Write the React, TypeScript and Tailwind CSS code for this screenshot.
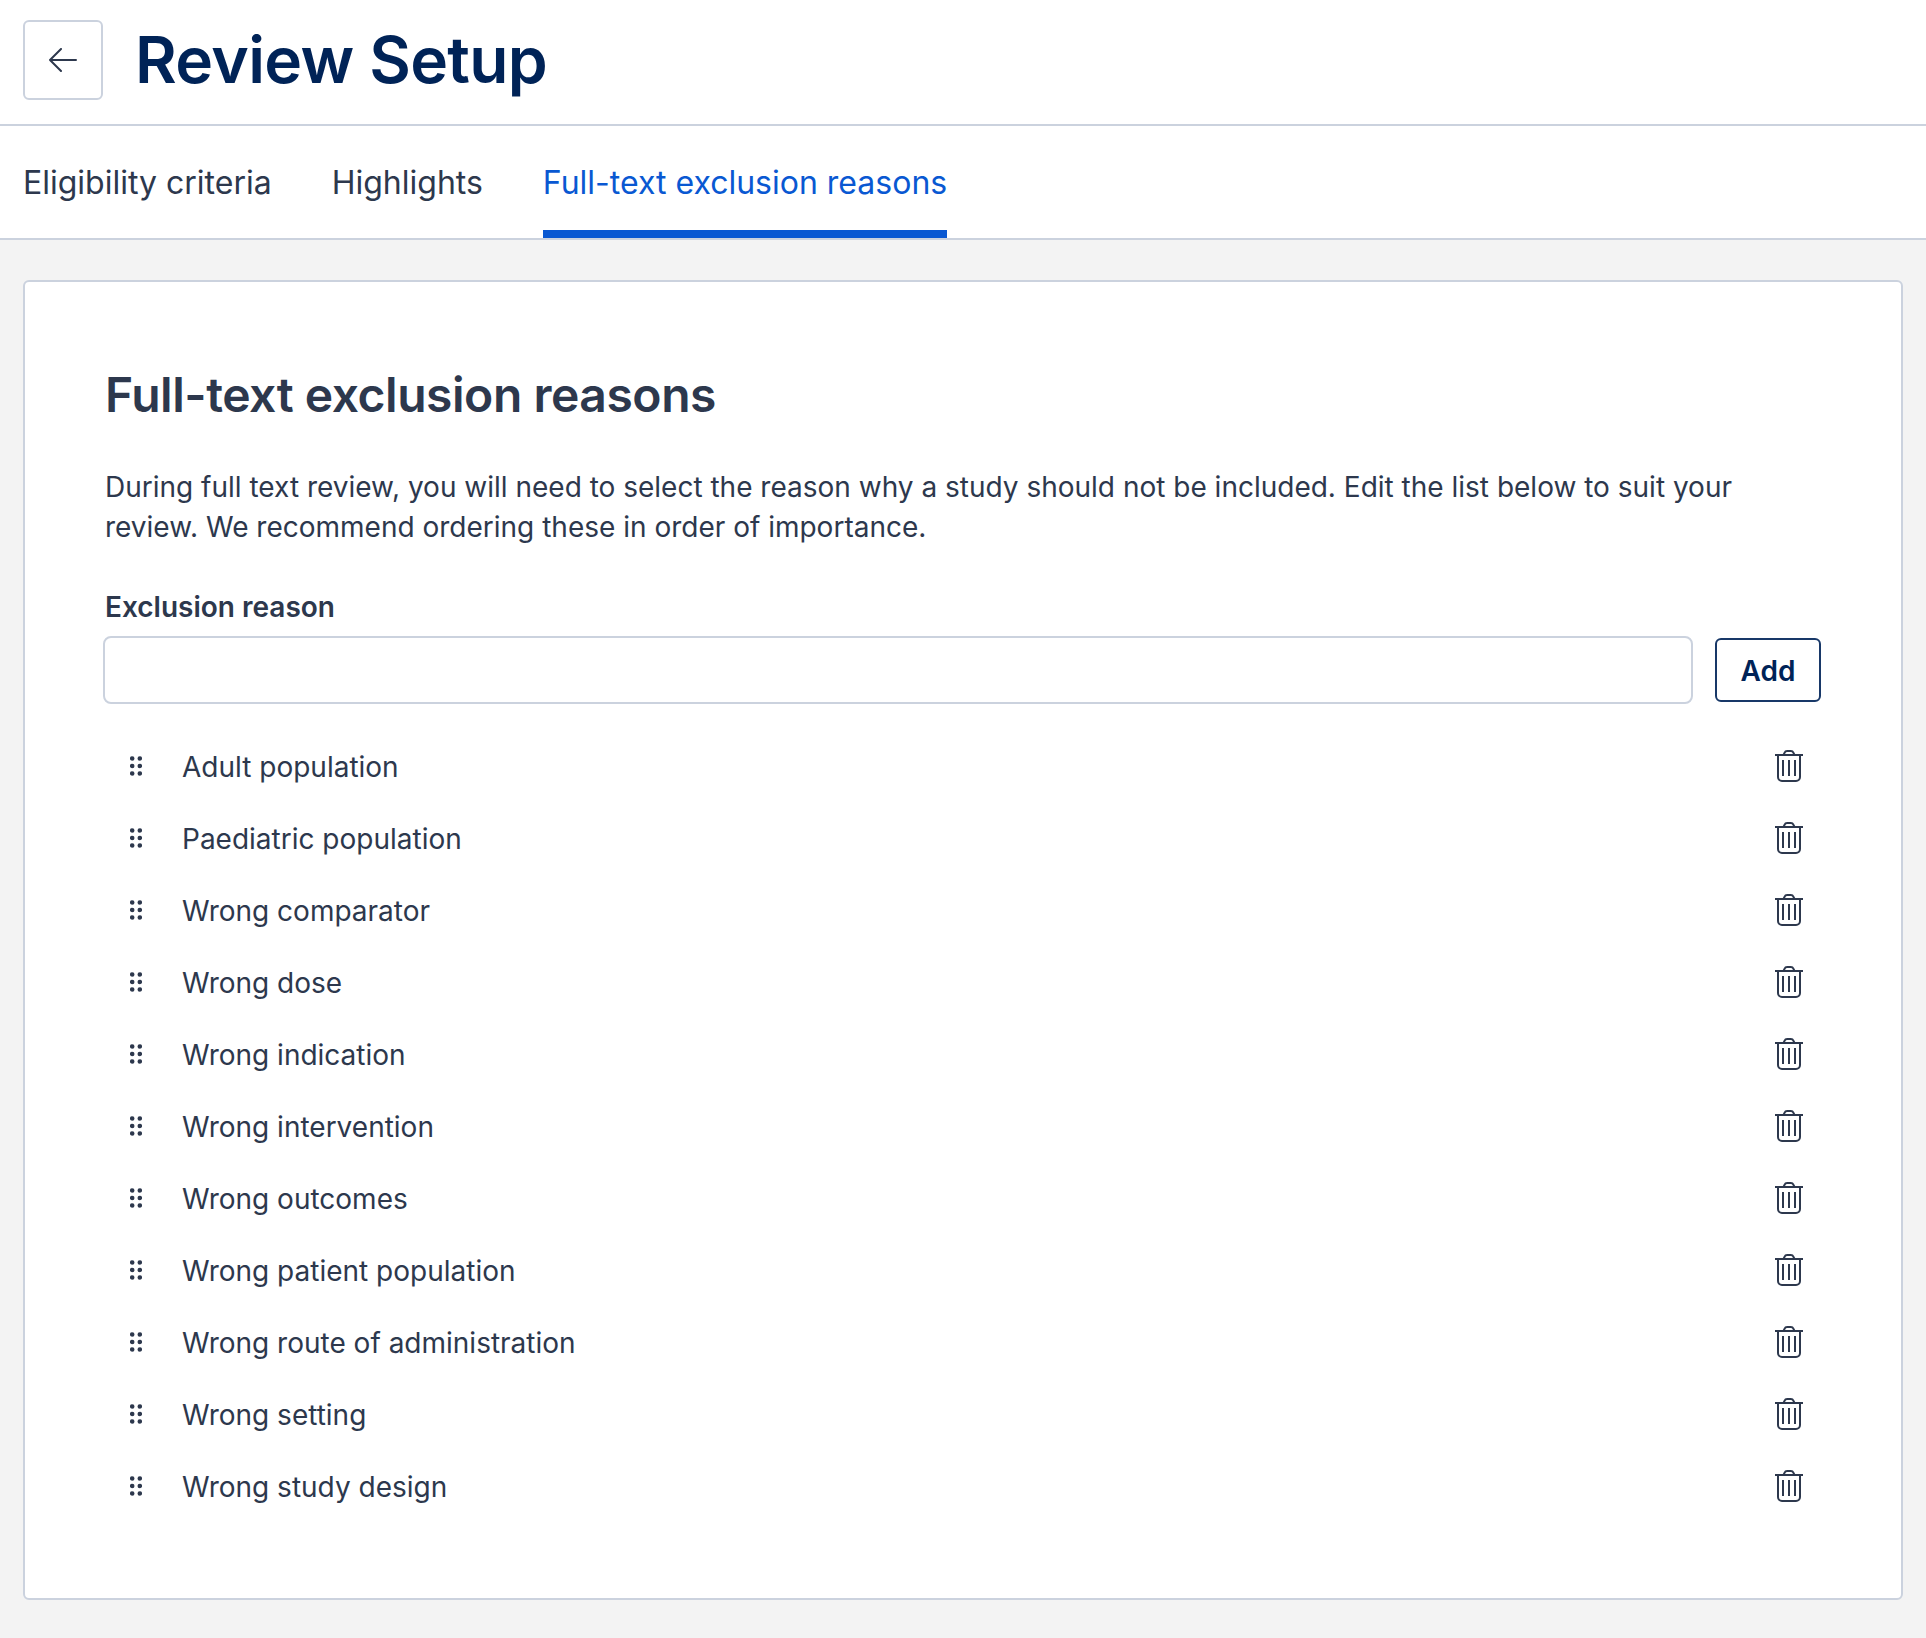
import { useState } from 'react';

const initialReasons = [
  'Adult population',
  'Paediatric population',
  'Wrong comparator',
  'Wrong dose',
  'Wrong indication',
  'Wrong intervention',
  'Wrong outcomes',
  'Wrong patient population',
  'Wrong route of administration',
  'Wrong setting',
  'Wrong study design',
];

const ArrowLeftIcon = () => (
  <svg className="w-7 h-6" viewBox="0 0 28 24" fill="none" stroke="currentColor" strokeWidth="2" strokeLinecap="round" strokeLinejoin="round">
    <path d="M27 12H1M12 1L1 12l11 11" />
  </svg>
);

const DragIcon = () => (
  <svg className="w-3 h-5" viewBox="0 0 12 20" fill="currentColor">
    <circle cx="2.2" cy="2.5" r="2.3" />
    <circle cx="9.8" cy="2.5" r="2.3" />
    <circle cx="2.2" cy="10" r="2.3" />
    <circle cx="9.8" cy="10" r="2.3" />
    <circle cx="2.2" cy="17.5" r="2.3" />
    <circle cx="9.8" cy="17.5" r="2.3" />
  </svg>
);

const TrashIcon = () => (
  <svg className="w-7 h-8" viewBox="0 0 28 32" fill="none" stroke="currentColor" strokeWidth="2">
    <path d="M0 5h28" />
    <path d="M8.500 5l1-2.200A3 3 0 0 1 12.200 1h3.600a3 3 0 0 1 2.700 1.800l1 2.200" />
    <path d="M3 5v22a4 4 0 0 0 4 4h14a4 4 0 0 0 4-4V5" />
    <path d="M8 10v16M14 10v16M20 10v16" />
  </svg>
);

const App = () => {
  const [reasons, setReasons] = useState(initialReasons);
  const [value, setValue] = useState('');

  const addReason = () => {
    if (!value.trim()) return;
    setReasons([...reasons, value.trim()]);
    setValue('');
  };

  return (
    <div className="min-h-screen bg-[#f3f3f3] text-[#2d384d] font-['Inter',sans-serif]">
      {/* Header */}
      <header className="flex items-center h-[126px] pl-[23px] pb-1 bg-white border-b-2 border-[#cbd2de]">
        <button aria-label="Back" className="flex items-center justify-center w-20 h-20 border-2 border-[#cbd2de] rounded-md">
          <ArrowLeftIcon />
        </button>
        <h1 className="ml-8 text-[64px] leading-none font-semibold tracking-[-0.64px] text-[#002357]">Review Setup</h1>
      </header>

      {/* Tabs */}
      <nav className="flex h-[114px] pl-[23px] gap-[60px] bg-white border-b-2 border-[#cbd2de] text-[32px] leading-[114px]">
        <a href="#">Eligibility criteria</a>
        <a href="#">Highlights</a>
        <a href="#" className="text-[#0958d2] border-b-8 border-[#0958d2]">Full-text exclusion reasons</a>
      </nav>

      <main className="px-[23px] pt-10 pb-[38px]">
        <section className="h-[1320px] px-20 pt-[83px] bg-white border-2 border-[#cbd2de] rounded-md">
          <h2 className="text-[48px] leading-[60px] font-semibold tracking-[-0.46px]">Full-text exclusion reasons</h2>
          <p className="mt-[42px] text-[28px] leading-10">
            During full text review, you will need to select the reason why a study should not be included. Edit the list below to suit your review. We recommend ordering these in order of importance.
          </p>

          <label htmlFor="reason" className="block mt-10 text-[28px] leading-10 font-semibold">Exclusion reason</label>
          <div className="flex items-center mt-[9px] -ml-0.5 gap-[22px]">
            <input
              id="reason"
              value={value}
              onChange={(e) => setValue(e.target.value)}
              className="flex-1 h-[68px] px-4 text-[28px] border-2 border-[#cbd2de] rounded-lg"
            />
            <button onClick={addReason} className="w-[106px] h-16 pt-0.5 text-[28px] font-semibold text-[#002357] border-2 border-[#183868] rounded-md">
              Add
            </button>
          </div>

          {/* Reasons list */}
          <ul className="mt-[26px]">
            {reasons.map((reason) => (
              <li key={reason} className="flex items-center h-18 pl-[25px] pr-[18px] text-[28px]">
                <DragIcon />
                <span className="flex-1 ml-10 pt-0.5">{reason}</span>
                <button aria-label="Delete" onClick={() => setReasons(reasons.filter((r) => r !== reason))}>
                  <TrashIcon />
                </button>
              </li>
            ))}
          </ul>
        </section>
      </main>
    </div>
  );
};

export default App;
